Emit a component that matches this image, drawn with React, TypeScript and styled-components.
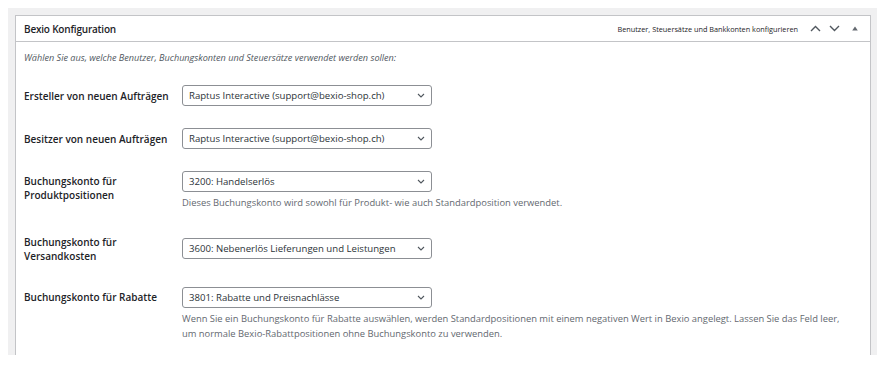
import React from "react";
import styled, { createGlobalStyle } from "styled-components";

const GlobalStyle = createGlobalStyle`
  html, body { margin: 0; padding: 0; background: #ffffff; }
  body { padding: 8px; font-family: "Open Sans", "Noto Sans", sans-serif; color: #1d2327; }
  * { box-sizing: border-box; }
`;

const Screen = styled.div`
  width: 869px;
  height: 347px;
  background: #f0f0f1;
  padding: 7px 6px 0 7px;
  overflow: hidden;
`;

const Postbox = styled.section`
  background: #ffffff;
  border: 1px solid #c3c4c7;
  min-height: 400px;
`;

const Header = styled.header`
  display: flex;
  align-items: center;
  height: 26px;
  padding: 0 4px 0 8px;
  border-bottom: 1px solid #c3c4c7;
`;

const Title = styled.h2`
  flex: 1;
  margin: 0;
  font-size: 10px;
  letter-spacing: -0.2px;
  font-weight: 600;
  color: #1d2327;
`;

const HeaderNote = styled.span`
  font-size: 7.3px;
  color: #1d2327;
  margin-right: 8px;
`;

const HandleButton = styled.button<{ $w?: number }>`
  display: inline-flex;
  align-items: center;
  justify-content: center;
  width: ${(p) => p.$w ?? 19}px;
  height: 20px;
  padding: 0;
  border: 0;
  background: transparent;
  color: #50575e;
`;

const Inside = styled.div`
  padding: 8px 8px 0 8px;
`;

const Intro = styled.p`
  margin: 0 0 9px 0;
  font-size: 9.1px;
  line-height: 15px;
  font-style: italic;
  color: #50575e;
`;

const Row = styled.div<{ $align: "center" | "start" }>`
  display: grid;
  grid-template-columns: 158px 1fr;
  align-items: ${(p) => p.$align};
  padding: 11px 0;
`;

const Label = styled.label`
  font-size: 10px;
  font-weight: 600;
  line-height: 14px;
  padding: 3px 0 2px;
  color: #1d2327;
`;

const Field = styled.div`
  display: flex;
  flex-direction: column;
  align-items: flex-start;
`;

const Select = styled.div`
  display: flex;
  align-items: center;
  justify-content: space-between;
  width: 250px;
  height: 21px;
  padding: 0 6px 0 6px;
  border: 1px solid #8c8f94;
  border-radius: 3px;
  font-size: 9.6px;
  color: #2c3338;
  background: #ffffff;
`;

const Description = styled.p`
  margin: 3px 0 0 0;
  font-size: 9.4px;
  line-height: 15px;
  color: #646970;
  max-width: 668px;
`;

const Chevron = () => (
  <svg width="8" height="5" viewBox="0 0 8 5" fill="none">
    <path d="M1 1l3 3 3-3" stroke="#50575e" strokeWidth="1.1" />
  </svg>
);

type Item = {
  label: React.ReactNode;
  value: string;
  description?: React.ReactNode;
  align: "center" | "start";
};

const items: Item[] = [
  { label: "Ersteller von neuen Aufträgen", value: "Raptus Interactive (support@bexio-shop.ch)", align: "center" },
  { label: "Besitzer von neuen Aufträgen", value: "Raptus Interactive (support@bexio-shop.ch)", align: "center" },
  {
    label: (
      <>
        Buchungskonto für
        <br />
        Produktpositionen
      </>
    ),
    value: "3200: Handelserlös",
    description: "Dieses Buchungskonto wird sowohl für Produkt- wie auch Standardposition verwendet.",
    align: "start",
  },
  {
    label: (
      <>
        Buchungskonto für
        <br />
        Versandkosten
      </>
    ),
    value: "3600: Nebenerlös Lieferungen und Leistungen",
    align: "center",
  },
  {
    label: "Buchungskonto für Rabatte",
    value: "3801: Rabatte und Preisnachlässe",
    description:
      "Wenn Sie ein Buchungskonto für Rabatte auswählen, werden Standardpositionen mit einem negativen Wert in Bexio angelegt. Lassen Sie das Feld leer, um normale Bexio-Rabattpositionen ohne Buchungskonto zu verwenden.",
    align: "start",
  },
];

export default function App() {
  return (
    <>
      <GlobalStyle />
      <Screen>
        <Postbox>
          <Header>
            <Title>Bexio Konfiguration</Title>
            <HeaderNote>Benutzer, Steuersätze und Bankkonten konfigurieren</HeaderNote>
            <HandleButton aria-label="Nach oben">
              <svg width="11" height="7" viewBox="0 0 11 7" fill="none">
                <path d="M1 6l4.5-4.5L10 6" stroke="#50575e" strokeWidth="1.4" />
              </svg>
            </HandleButton>
            <HandleButton aria-label="Nach unten">
              <svg width="11" height="7" viewBox="0 0 11 7" fill="none">
                <path d="M1 1l4.5 4.5L10 1" stroke="#50575e" strokeWidth="1.4" />
              </svg>
            </HandleButton>
            <HandleButton aria-label="Umschalten" $w={22}>
              <svg width="6" height="5" viewBox="0 0 6 5">
                <path d="M3 0.5L5.8 4.5H0.2z" fill="#646970" />
              </svg>
            </HandleButton>
          </Header>
          <Inside>
            <Intro>Wählen Sie aus, welche Benutzer, Buchungskonten und Steuersätze verwendet werden sollen:</Intro>
            {items.map((it, i) => (
              <Row key={i} $align={it.align}>
                <Label>{it.label}</Label>
                <Field>
                  <Select>
                    <span>{it.value}</span>
                    <Chevron />
                  </Select>
                  {it.description && <Description>{it.description}</Description>}
                </Field>
              </Row>
            ))}
          </Inside>
        </Postbox>
      </Screen>
    </>
  );
}
